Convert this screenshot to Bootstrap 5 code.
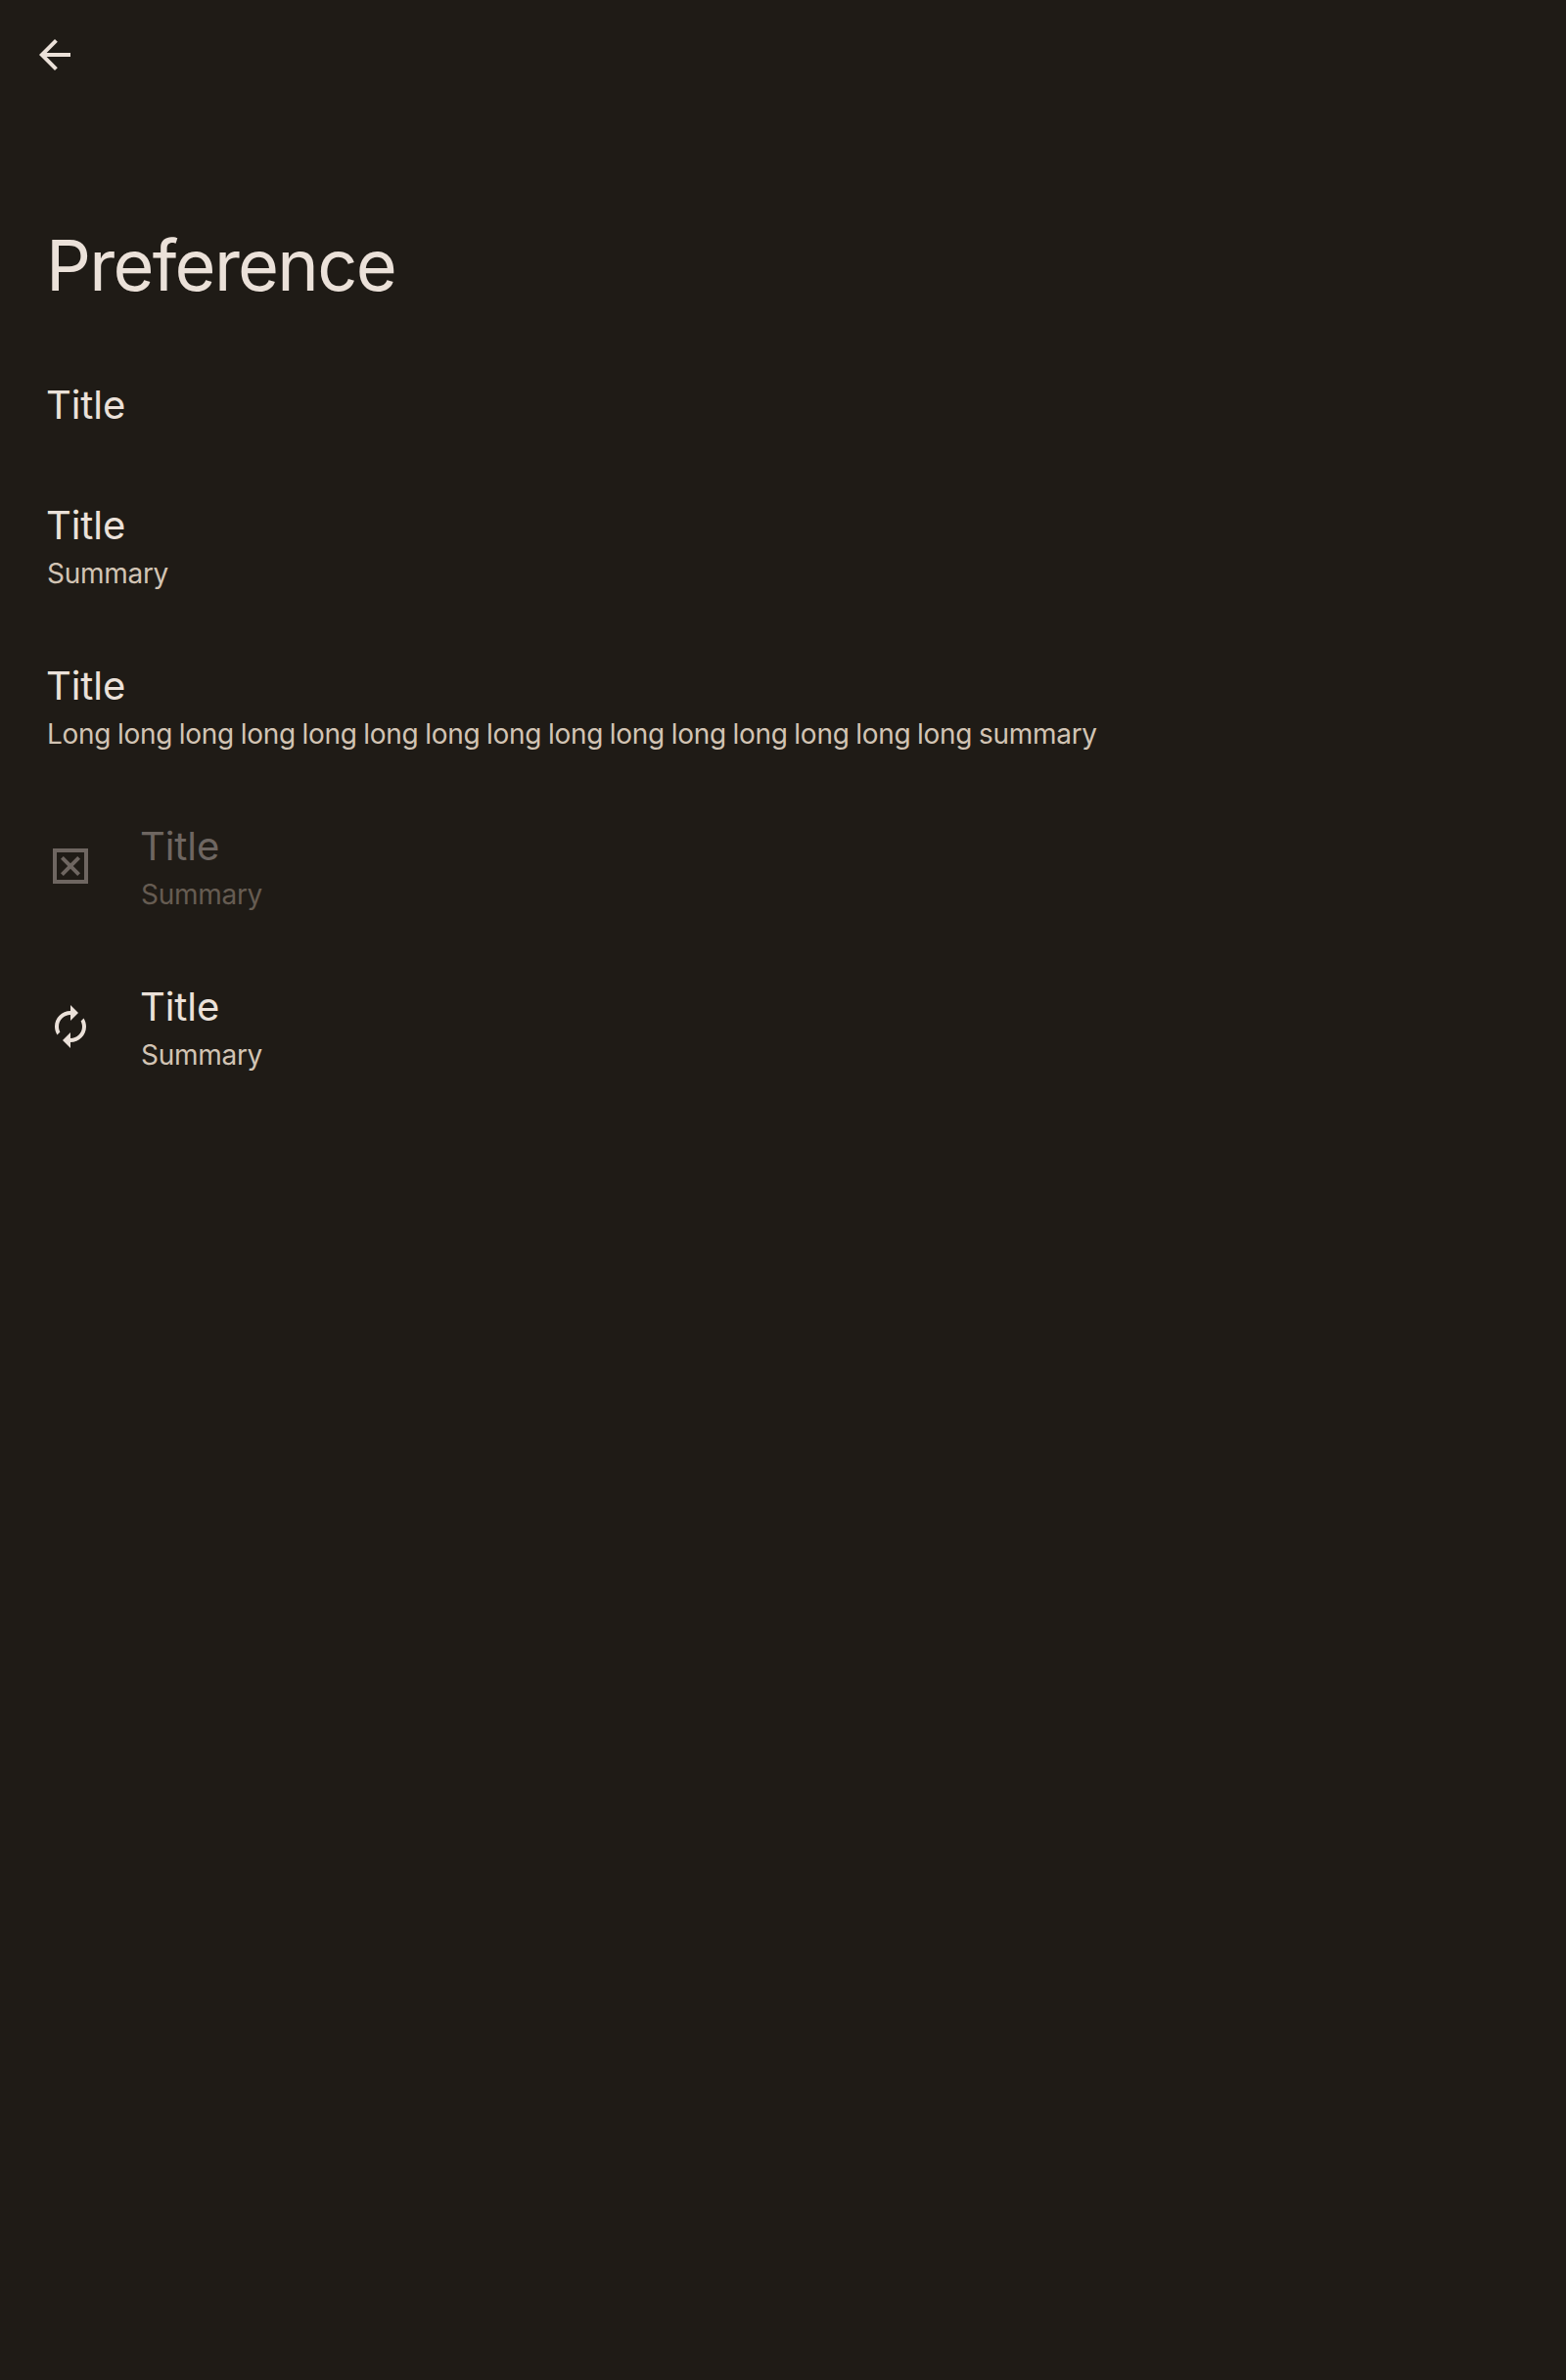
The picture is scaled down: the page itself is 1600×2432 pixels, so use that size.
<!DOCTYPE html>
<html lang="en" data-bs-theme="dark">
<head>
<meta charset="utf-8">
<meta name="viewport" content="width=device-width, initial-scale=1">
<title>Preference</title>
<link rel="stylesheet" href="https://cdn.jsdelivr.net/npm/bootstrap@5.3.0/dist/css/bootstrap.min.css">
<style>
  body { background: #1f1b16; color: #ebe1d9; font-family: Inter, Roboto, sans-serif; min-height: 100vh; }
  .app-bar { height: 112px; padding: 0 32px; }
  .back-btn { --bs-btn-padding-x: 0; --bs-btn-padding-y: 0; line-height: 0; border: 0; color: #ebe1d9; }
  .glyph { width: 48px; height: 48px; fill: currentColor; flex: none; }
  .page-title { font-size: 72px; line-height: 88px; font-weight: 400; letter-spacing: -1.7px; padding: 115px 47px 38px; color: #ebe1d9; }
  .pref-row { padding: 31px 48px 33px; gap: 48px; }
  .pref-title { font-size: 40px; line-height: 59px; letter-spacing: -.1px; text-indent: -1px; }
  .pref-summary { font-size: 28px; line-height: 41px; letter-spacing: -.28px; word-spacing: -.9px; color: #d2c4b4; }
  .pref-row.is-disabled .pref-title, .pref-row.is-disabled .glyph { color: #6e6661; }
  .pref-row.is-disabled .pref-summary { color: #665c52; }
</style>
<script src="https://cdn.jsdelivr.net/npm/bootstrap@5.3.0/dist/js/bootstrap.bundle.min.js"></script>
</head>
<body>
<header class="app-bar d-flex align-items-center">
  <button class="btn back-btn" type="button" aria-label="Navigate up">
    <svg class="glyph" viewBox="0 0 24 24"><path d="M20 11H7.83l5.59-5.59L12 4l-8 8 8 8 1.41-1.41L7.83 13H20z"/></svg>
  </button>
</header>
<main>
  <h1 class="page-title m-0">Preference</h1>
  <div class="d-flex flex-column">
    <div class="pref-row d-flex align-items-center">
      <div><div class="pref-title">Title</div></div>
    </div>
    <div class="pref-row d-flex align-items-center">
      <div>
        <div class="pref-title">Title</div>
        <div class="pref-summary">Summary</div>
      </div>
    </div>
    <div class="pref-row d-flex align-items-center">
      <div>
        <div class="pref-title">Title</div>
        <div class="pref-summary">Long long long long long long long long long long long long long long long summary</div>
      </div>
    </div>
    <div class="pref-row is-disabled d-flex align-items-center">
      <svg class="glyph" viewBox="0 0 24 24"><path fill-rule="evenodd" d="M3 3h18v18H3zM5 5v14h14V5z"/><path d="M8.4 7L7 8.4l3.6 3.6L7 15.6 8.4 17l3.6-3.6 3.6 3.6 1.4-1.4-3.6-3.6L17 8.4 15.6 7 12 10.6z"/></svg>
      <div>
        <div class="pref-title">Title</div>
        <div class="pref-summary">Summary</div>
      </div>
    </div>
    <div class="pref-row d-flex align-items-center">
      <svg class="glyph" viewBox="0 0 24 24"><path d="M12 6v3l4-4-4-4v3c-4.42 0-8 3.58-8 8 0 1.57.46 3.03 1.24 4.26L6.7 14.8c-.45-.83-.7-1.79-.7-2.8 0-3.31 2.69-6 6-6zm6.76 1.74L17.3 9.2c.44.84.7 1.79.7 2.8 0 3.31-2.69 6-6 6v-3l-4 4 4 4v-3c4.42 0 8-3.58 8-8 0-1.57-.46-3.03-1.24-4.26z"/></svg>
      <div>
        <div class="pref-title">Title</div>
        <div class="pref-summary">Summary</div>
      </div>
    </div>
  </div>
</main>
</body>
</html>
